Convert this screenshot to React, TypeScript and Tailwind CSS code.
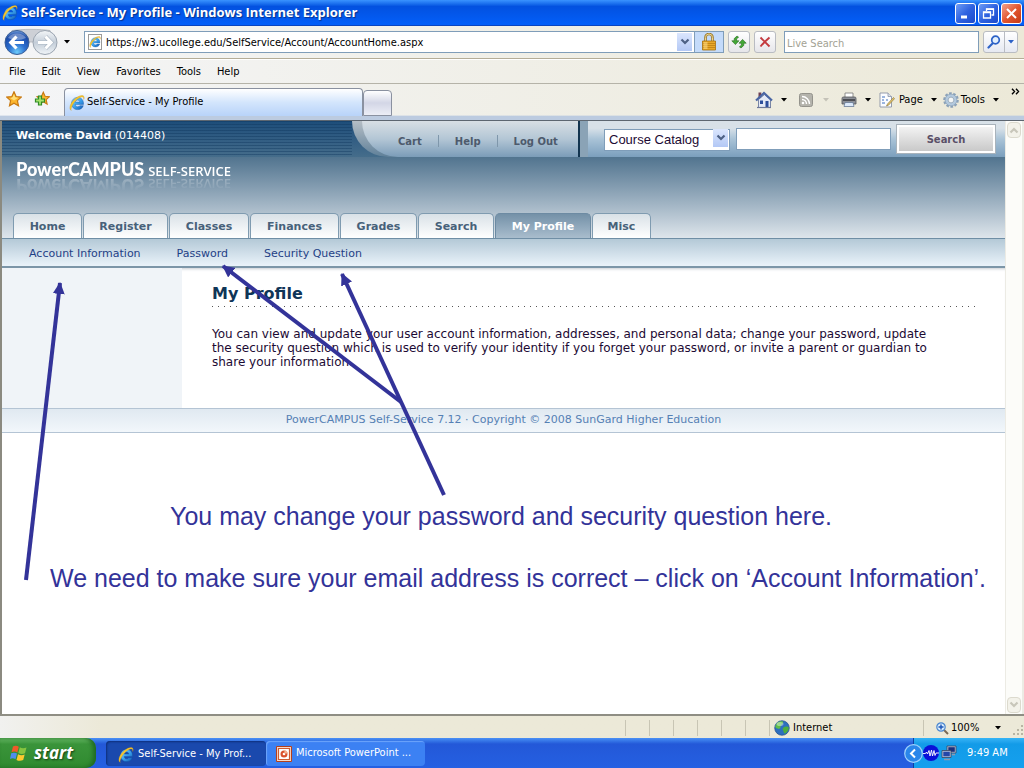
import React, { useId, useState } from "react";

const TAHOMA = "font-['DejaVu_Sans_Condensed','DejaVu_Sans',sans-serif]";
const VERDANA = "font-['DejaVu_Sans',sans-serif]";

type IconProps = { className?: string };

function IeLogo({ className = "size-4" }: IconProps) {
  const id = useId();
  return (
    <svg viewBox="0 0 16 16" className={className} aria-hidden="true">
      <defs>
        <linearGradient id={id} x1="0" y1="0" x2="1" y2="1">
          <stop offset="0" stopColor="#8fdcff" />
          <stop offset="0.5" stopColor="#3ba4f0" />
          <stop offset="1" stopColor="#1257b0" />
        </linearGradient>
      </defs>
      <path
        d="M8.6 2.4c-3.500 0-6.100 2.600-6.100 6.100s2.500 6.100 6.100 6.100c2.800 0 4.900-1.400 5.700-3.900h-3.500c-.4.7-1.100 1.100-2 1.100-1.500 0-2.400-.9-2.500-2.400h8.200c.4-4.200-2-7-5.900-7zM6.300 7.100c.2-1.300 1.100-2 2.300-2s2.100.7 2.200 2z"
        fill={`url(#${id})`}
        stroke="#0e4f9e"
        strokeWidth="0.4"
      />
      <path
        d="M2.300 15.400C.2 14.500.4 10.800 3.100 7.100 6.300 2.700 11.600-.5 14.200.8c1.200.6 1.200 2 .5 3.700.2-1.300 0-2.100-.8-2.400-2-.8-6.300 2-9 5.900-2.300 3.200-3.400 6.500-2.600 7.400z"
        fill="#f6c72f"
        stroke="#c98f13"
        strokeWidth="0.3"
      />
    </svg>
  );
}

function Caret({ className = "text-black" }: IconProps) {
  return (
    <svg viewBox="0 0 6 4" className={`h-1 w-1.5 shrink-0 ${className}`} aria-hidden="true">
      <path d="M0 0h6L3 3.500z" fill="currentColor" />
    </svg>
  );
}

function Chevron({ className = "text-[#4d6185]" }: IconProps) {
  return (
    <svg viewBox="0 0 10 8" className={`h-2 w-2.5 ${className}`} aria-hidden="true">
      <path d="M1.500 1.500 5 5l3.500-3.500" fill="none" stroke="currentColor" strokeWidth="2.200" />
    </svg>
  );
}

function HistoryButtons() {
  return (
    <div className="relative flex h-7 w-[54px] shrink-0 items-center justify-between">
      <svg viewBox="0 0 54 28" className="absolute inset-0 h-7 w-[54px]" aria-hidden="true">
        <defs>
          <radialGradient id="backFill" cx="0.5" cy="0.9" r="0.9">
            <stop offset="0" stopColor="#6ccbfa" />
            <stop offset="0.4" stopColor="#2c6fd0" />
            <stop offset="0.8" stopColor="#1b4aa8" />
            <stop offset="1" stopColor="#7aa5e0" />
          </radialGradient>
          <linearGradient id="forwardFill" x1="0" y1="0" x2="0" y2="1">
            <stop offset="0" stopColor="#f4f6f8" />
            <stop offset="0.5" stopColor="#c3cdd8" />
            <stop offset="1" stopColor="#f1f5f8" />
          </linearGradient>
        </defs>
        <path d="M8 2.500C18 1 36 1 46 2.500L50 14H4z" fill="#cdd0d6" stroke="#aeb2ba" strokeWidth="0.800" />
        <circle cx="13" cy="14.500" r="12" fill="url(#backFill)" stroke="#3b5f96" />
        <path d="M4 10a10 8 0 0 1 18 0q-9 4-18 0z" fill="#fff" opacity="0.350" />
        <path d="M12.500 8.500 6.800 14.500l5.700 6M7.500 14.500H20" fill="none" stroke="#fff" strokeWidth="3.200" />
        <circle cx="41" cy="14.500" r="12" fill="url(#forwardFill)" stroke="#9aa4b0" />
        <path d="M41.500 8.500l5.700 6-5.700 6M46.500 14.500H34" fill="none" stroke="#aab5c2" strokeWidth="4.200" />
        <path d="M41.500 8.500l5.700 6-5.700 6M46.500 14.500H34" fill="none" stroke="#fff" strokeWidth="3" />
      </svg>
      <button aria-label="Back" className="relative size-6 rounded-full" />
      <button aria-label="Forward" className="relative size-6 rounded-full" />
    </div>
  );
}

function PageIeIcon() {
  return (
    <span className="relative flex h-4 w-3.5 shrink-0 items-center justify-center border border-[#9a9a9a] bg-white">
      <IeLogo className="size-3 shrink-0" />
    </span>
  );
}

function LockIcon() {
  return (
    <svg viewBox="0 0 14 18" className="h-[18px] w-3.5" aria-hidden="true">
      <path d="M3.500 9V4.500a3.500 3.500 0 0 1 7 0V9" fill="none" stroke="#9b7a2c" strokeWidth="2.600" />
      <path d="M3.500 9V4.500a3.500 3.500 0 0 1 7 0V9" fill="none" stroke="#ecd48e" strokeWidth="1" />
      <path d="M.5 8h13v9H.5z" fill="#e9a92a" stroke="#a56f0e" strokeWidth="0.800" />
      <path d="M1 10.500h12M1 12.500h12M1 14.500h12" stroke="#b97a10" strokeWidth="0.700" />
      <path d="M1.500 9h4v7h-4z" fill="#ffe08a" opacity="0.550" />
    </svg>
  );
}

function RefreshIcon() {
  return (
    <svg viewBox="0 0 16 16" className="size-4" aria-hidden="true">
      <path d="M.8 6.800h2.400V4.600L6 2 7.600 3.200 5.600 4.800v2H8L4.400 10.600z" fill="#43a836" stroke="#256b1d" strokeWidth="0.600" />
      <path d="M15.200 9.200h-2.400v2.200L10 14l-1.600-1.200 2-1.600v-2H8l3.600-3.800z" fill="#43a836" stroke="#256b1d" strokeWidth="0.600" />
    </svg>
  );
}

function StopIcon() {
  return (
    <svg viewBox="0 0 12 12" className="size-3" aria-hidden="true">
      <path d="M1.500 1.500C4 4 7 7 10.500 10.500M10.500 1.500C7 4.500 4 7.500 1.500 10.500" stroke="#c43a3f" strokeWidth="1.900" fill="none" />
    </svg>
  );
}

function MagnifierIcon({ className = "size-3.5" }: IconProps) {
  return (
    <svg viewBox="0 0 14 14" className={className} aria-hidden="true">
      <path d="M6 8 1.500 12.500" stroke="#2d62c7" strokeWidth="2.200" strokeLinecap="round" />
      <circle cx="8.500" cy="5" r="3.800" fill="#e3f0fd" stroke="#2d62c7" strokeWidth="1.700" />
    </svg>
  );
}

const STAR = "M8 .8l2.100 4.800 5.200.5-3.900 3.500 1.100 5.200L8 12.200l-4.500 2.600 1.100-5.200L.7 6.100l5.200-.5z";

function StarIcon() {
  return (
    <svg viewBox="0 0 16 16" className="size-4" aria-hidden="true">
      <path d={STAR} fill="#fcb52c" stroke="#c87a14" strokeWidth="1.200" />
      <path d="M8 3l1.200 3.300 3 .4L8 9.500 4.500 7.200l2-.9z" fill="#ffe07a" />
    </svg>
  );
}

function AddStarIcon() {
  return (
    <svg viewBox="0 0 16 16" className="size-4" aria-hidden="true">
      <g transform="translate(2.500 0.500) scale(0.850)">
        <path d={STAR} fill="#fcb52c" stroke="#c87a14" strokeWidth="1.300" />
      </g>
      <path d="M4.500 5h3v3h3v3h-3v3h-3v-3h-3V8h3z" fill="#a6e36c" stroke="#2f8c27" strokeWidth="1.200" />
    </svg>
  );
}

function HomeIcon() {
  return (
    <svg viewBox="0 0 18 18" className="size-[18px]" aria-hidden="true">
      <path d="M3.500 1.500h2.800v6H3.500z" fill="#6d3f52" />
      <path d="M3.500 8.500v8h12v-8L9.500 3.500z" fill="#e4e9f6" stroke="#5c6c94" strokeWidth="0.800" />
      <path d="M1 9.500 9 2l8 7.500" fill="none" stroke="#4a66a4" strokeWidth="2.200" />
      <path d="M5 9.500h3v3.500H5zM10.500 10h3v6.500h-3z" fill="#2d4e9b" />
      <path d="M2 16.500h14" stroke="#6d789a" strokeWidth="1.200" />
    </svg>
  );
}

function FeedIcon() {
  return (
    <svg viewBox="0 0 14 14" className="size-3.5" aria-hidden="true">
      <rect x="0.500" y="0.500" width="13" height="13" rx="2" fill="#b4b3ac" stroke="#94938c" />
      <circle cx="4" cy="10" r="1.300" fill="#fff" />
      <path d="M3 6.500a4.500 4.500 0 0 1 4.500 4.500M3 3.500a7.500 7.500 0 0 1 7.500 7.500" fill="none" stroke="#fff" strokeWidth="1.400" />
    </svg>
  );
}

function PrinterIcon() {
  return (
    <svg viewBox="0 0 16 16" className="size-4" aria-hidden="true">
      <path d="M4 1h8v5H4z" fill="#fff" stroke="#777" strokeWidth="0.800" />
      <path d="M1 6.500C1 5.500 1.500 5 2.500 5h11c1 0 1.500.5 1.500 1.500V12H1z" fill="#8d9097" stroke="#54565c" strokeWidth="0.800" />
      <path d="M2 8h12" stroke="#3c3e44" strokeWidth="1.600" />
      <path d="M4 10.500h8l1 4H3z" fill="#dce9fa" stroke="#6a7c98" strokeWidth="0.800" />
    </svg>
  );
}

function PageIcon() {
  return (
    <svg viewBox="0 0 16 16" className="size-4" aria-hidden="true">
      <path d="M1 1h8l3.500 3.500V15H1z" fill="#fbfcff" stroke="#8a93a6" strokeWidth="0.900" />
      <path d="M9 1v3.500h3.500" fill="#dde3ee" stroke="#8a93a6" strokeWidth="0.800" />
      <path d="M3 5h3M3 8h2M3 11h3M7 8h2" stroke="#3d6fbf" />
      <path d="M14.500 5.500 8.500 12l-1 2 2-.8 6-6.500z" fill="#e9c668" stroke="#8e7b45" strokeWidth="0.700" />
    </svg>
  );
}

function GearIcon() {
  return (
    <svg viewBox="0 0 16 16" className="size-4" aria-hidden="true">
      <circle cx="8" cy="8" r="6.600" fill="none" stroke="#8ba1b8" strokeWidth="2.400" strokeDasharray="2.600 1.540" />
      <circle cx="8" cy="8" r="4.600" fill="none" stroke="#b3c9de" strokeWidth="3" />
      <circle cx="8" cy="8" r="5.900" fill="none" stroke="#8299b0" strokeWidth="0.600" />
      <circle cx="8" cy="8" r="2.900" fill="#f4f6f6" stroke="#7c93aa" strokeWidth="0.700" />
    </svg>
  );
}

function GlobeIcon() {
  return (
    <svg viewBox="0 0 16 16" className="size-4" aria-hidden="true">
      <circle cx="8" cy="8" r="7.300" fill="#2d6fbe" stroke="#24508b" strokeWidth="0.700" />
      <path d="M3 3C5 1 8 1 9 1.500 10 3 8 4 7 5.500 6 7 7 8 5 9 3 8.500 1.500 8 1.200 6.500z" fill="#5fbd4a" />
      <path d="M10 7c2-1 4-.5 4.800.5 0 3-2 5-4 6.300C9 12 9.500 10 8.500 9z" fill="#4cae3d" />
      <ellipse cx="6" cy="4" rx="3.500" ry="2" fill="#fff" opacity="0.400" />
    </svg>
  );
}

function ZoomIcon() {
  return (
    <svg viewBox="0 0 13 13" className="size-[13px]" aria-hidden="true">
      <path d="M8 8l4 4" stroke="#7b6a55" strokeWidth="2" />
      <circle cx="5" cy="5" r="4.200" fill="#d9ecfc" stroke="#4a86cf" strokeWidth="1.200" />
      <path d="M5 2.500v5M2.500 5h5" stroke="#1d55b8" strokeWidth="1.400" />
    </svg>
  );
}

function WindowsFlag() {
  return (
    <svg viewBox="0 0 18 18" className="size-[18px]" aria-hidden="true">
      <path d="M3 2.500C5 1.500 7 1.500 8.800 2.800L7.300 8.500C5.600 7.300 3.500 7.300 1.500 8.200z" fill="#f0592a" />
      <path d="M9.800 3.300c2 1.200 4.300 1.200 6.700.2L15 9.200c-2.200 1-4.400 1-6.700-.2z" fill="#86c440" />
      <path d="M1.200 9.300c2-.9 4-.9 5.800.3l-1.500 5.700c-1.700-1.200-3.800-1.200-5.500-.3z" fill="#4f8df0" />
      <path d="M8 10.200c2.200 1.200 4.500 1.200 6.700.2l-1.500 5.700c-2.300 1-4.600 1-6.700-.2z" fill="#fdc92f" />
    </svg>
  );
}

function PowerPointIcon() {
  return (
    <svg viewBox="0 0 16 16" className="size-4" aria-hidden="true">
      <path d="M.5.5h15v15H.5z" fill="#f6d9ca" stroke="#b4401d" />
      <path d="M2.500 2.500h11v11h-11z" fill="#fff" stroke="#cf5b32" strokeWidth="1.200" />
      <circle cx="8" cy="8" r="3.500" fill="#d9512c" />
      <circle cx="8" cy="8" r="1.300" fill="#fff" />
      <path d="M8.400 7.600V4.300a3.500 3.500 0 0 1 3.300 3.300z" fill="#f5b08f" />
    </svg>
  );
}

function TrayWaveIcon() {
  return (
    <svg viewBox="0 0 16 16" className="size-4" aria-hidden="true">
      <circle cx="8" cy="8" r="8" fill="#0a10d8" />
      <path d="M0 8.500h2.500l1-1.500 1 2L6 5.500 7 11l1.500-6 1 6L11 5.500l1 5 1-2.500h3" fill="none" stroke="#fff" strokeWidth="0.900" />
    </svg>
  );
}

function TrayNetworkIcon() {
  return (
    <svg viewBox="0 0 16 16" className="size-4" aria-hidden="true">
      <path d="M6 1h9v7H6z" fill="#b9c3da" stroke="#39445f" strokeWidth="0.800" />
      <path d="M7.300 2.200h6.500v4.600H7.300z" fill="#1b2f7a" />
      <path d="M1 5.500h9v7H1z" fill="#b9c3da" stroke="#39445f" strokeWidth="0.800" />
      <path d="M2.300 6.700h6.500v4.600H2.300z" fill="#2446a8" />
      <path d="M3 14.500h6M11 9.500h3" stroke="#8d97b0" strokeWidth="1.500" />
    </svg>
  );
}

function CaptionButton({ label, tone, children }: { label: string; tone: string; children: React.ReactNode }) {
  return (
    <button
      aria-label={label}
      className={`flex size-[21px] items-center justify-center rounded-[3px] border border-white ${tone}`}
    >
      <svg viewBox="0 0 13 13" className="size-[13px]" fill="none" stroke="#fff" aria-hidden="true">
        {children}
      </svg>
    </button>
  );
}

const BLUE_CAPTION = "bg-linear-to-br from-[#6f9cf5] via-[#2f62e0] to-[#1c4acb]";

function TitleBar() {
  return (
    <header className="flex h-[26px] items-center bg-linear-to-b from-[#3a93ff] via-[#0351e0] via-25% to-[#0360fb] pr-0.5 pl-0.5 shadow-[inset_0_-1px_0_#0a45c0]">
      <IeLogo className="size-4" />
      <h1 className="ml-[3px] font-['Open_Sans','Noto_Sans',sans-serif] text-[13px] font-bold whitespace-nowrap text-white [text-shadow:1px_1px_1px_#08318c]">
        Self-Service - My Profile - Windows Internet Explorer
      </h1>
      <div className="ml-auto flex gap-0.5">
        <CaptionButton label="Minimize" tone={BLUE_CAPTION}>
          <path d="M2 10h6" strokeWidth="3" />
        </CaptionButton>
        <CaptionButton label="Restore" tone={BLUE_CAPTION}>
          <path d="M4.500 4V2h7v6h-2" strokeWidth="1.300" />
          <path d="M1.500 5h7v6h-7z" strokeWidth="1.300" />
          <path d="M1 5.500h8M4 2.300h8" strokeWidth="1.600" />
        </CaptionButton>
        <CaptionButton label="Close" tone="bg-linear-to-br from-[#f0a08a] via-[#e2562f] to-[#c43a12]">
          <path d="M2 2l9 9M11 2l-9 9" strokeWidth="2" />
        </CaptionButton>
      </div>
    </header>
  );
}

const TOOL_BUTTON =
  "flex h-[22px] w-[22px] shrink-0 items-center justify-center rounded-[3px] border border-[#b9bcc2] bg-linear-to-b from-white to-[#e6e6ea]";

function AddressBar() {
  const [url, setUrl] = useState("https://w3.ucollege.edu/SelfService/Account/AccountHome.aspx");
  return (
    <div className="flex h-[33px] items-center border-b border-[#b5ad97] pr-1.5 pl-1">
      <HistoryButtons />
      <button aria-label="Recent pages" className="ml-1.5 flex h-4 w-1.5 items-center">
        <Caret />
      </button>
      <div className="ml-3.5 flex h-[22px] flex-1 items-center border border-[#7f9db9] bg-white pl-[3px]">
        <PageIeIcon />
        <input
          aria-label="Address"
          value={url}
          onChange={(e) => setUrl(e.target.value)}
          className="ml-1 min-w-0 flex-1 bg-transparent pt-0.5 text-[11px] text-black outline-none"
        />
        <button
          aria-label="Show address history"
          className="flex h-[18px] w-[15px] items-center justify-center bg-linear-to-b from-[#dbe6fd] to-[#b3c8f5]"
        >
          <Chevron />
        </button>
        <button
          aria-label="Security report"
          className="ml-0.5 flex h-5 w-[29px] items-center justify-center border-l border-[#7f9db9] bg-[#c4dbfa]"
        >
          <LockIcon />
        </button>
      </div>
      <button aria-label="Refresh" className={`ml-1 ${TOOL_BUTTON}`}>
        <RefreshIcon />
      </button>
      <button aria-label="Stop" className={`ml-1 ${TOOL_BUTTON}`}>
        <StopIcon />
      </button>
      <input
        aria-label="Live Search"
        placeholder="Live Search"
        className="ml-2 h-[22px] w-[195px] border border-[#7f9db9] bg-white px-0.5 pt-0.5 text-[11px] outline-none placeholder:text-[#a3a294]"
      />
      <div className="ml-1 flex h-[22px] w-[35px] rounded-[3px] border border-[#b9bcc2] bg-linear-to-b from-white to-[#e6e9f2]">
        <button aria-label="Search the web" className="flex flex-1 items-center justify-center border-r border-[#b9bcc2]">
          <MagnifierIcon />
        </button>
        <button aria-label="Search options" className="flex w-3 items-center justify-center">
          <Caret className="text-[#2d62c7]" />
        </button>
      </div>
    </div>
  );
}

function MenuBar() {
  const items = ["File", "Edit", "View", "Favorites", "Tools", "Help"];
  return (
    <nav
      aria-label="Browser menu"
      className="flex h-[25px] items-center gap-4 border-t border-b border-t-white border-b-[#b5b3a8] pt-0.5 pl-[9px] text-[11px]"
    >
      {items.map((item) => (
        <button key={item}>{item}</button>
      ))}
    </nav>
  );
}

function TabStrip() {
  return (
    <div className="flex h-[37px] items-end border-b border-[#5d6670] bg-linear-to-b from-transparent from-86% to-[#bccbe0] to-90%">
      <div className="flex h-full items-center gap-3 pb-1.5 pl-1.5">
        <button aria-label="Favorites Center"><StarIcon /></button>
        <button aria-label="Add to Favorites"><AddStarIcon /></button>
      </div>
      <div className="mb-1 ml-3.5 flex h-7 w-[299px] items-center gap-0.5 rounded-t-[4px] border border-b-0 border-[#8a91a0] bg-linear-to-b from-white via-[#d3e5fc] to-[#b8d3f9] pl-1 text-[11px]">
        <IeLogo className="size-4" />
        <span>Self-Service - My Profile</span>
      </div>
      <button
        aria-label="New Tab"
        className="mb-1 h-[26px] w-[29px] rounded-t-[4px] border border-[#8a91a0] bg-linear-to-b from-white via-[#d3d6e6] to-[#eceef6]"
      />
      <div className="ml-auto flex h-full items-center pb-1 text-[11px]">
        <button aria-label="Home page"><HomeIcon /></button>
        <Caret className="ml-2 text-black" />
        <button aria-label="Feeds" className="ml-3"><FeedIcon /></button>
        <Caret className="ml-2.5 text-[#c4c2b8]" />
        <button aria-label="Print" className="ml-3"><PrinterIcon /></button>
        <Caret className="ml-2 text-black" />
        <button className="ml-2 flex items-center gap-1"><PageIcon />Page<Caret className="ml-1 text-black" /></button>
        <button className="ml-1.5 flex items-center gap-0.5"><GearIcon />Tools<Caret className="ml-1.5 text-black" /></button>
        <button aria-label="More commands" className="mr-1 ml-3 self-start pt-1">
          <svg viewBox="0 0 9 7" className="h-[7px] w-[9px]" fill="none" stroke="#000" strokeWidth="1.400" aria-hidden="true">
            <path d="M1 .8 3.500 3.500 1 6.200M5 .8l2.500 2.700L5 6.200" />
          </svg>
        </button>
      </div>
    </div>
  );
}

const TABS = [
  { label: "Home", width: "w-[69px]" },
  { label: "Register", width: "w-[85px]" },
  { label: "Classes", width: "w-20" },
  { label: "Finances", width: "w-[89px]" },
  { label: "Grades", width: "w-[77px]" },
  { label: "Search", width: "w-[76px]" },
  { label: "My Profile", width: "w-24" },
  { label: "Misc", width: "w-[59px]" },
];

function UtilityPanel() {
  return (
    <div className="flex w-[228px] rounded-bl-[44px] border-r-2 border-[#12344f] bg-linear-to-b from-[#b5bec5] to-[#5f8099]">
      <nav
        aria-label="Account"
        className="ml-2.5 flex flex-1 items-center rounded-bl-[40px] bg-linear-to-b from-[#d8dfe4] via-[#b3c6d5] to-[#7b9cb8] pt-1 pl-9 text-[10px] font-bold text-[#4d5a6c]"
      >
        <a href="#cart">Cart</a>
        <span className="mx-4 h-3 w-px bg-[#7f97ab]" />
        <a href="#help">Help</a>
        <span className="mx-4 h-3 w-px bg-[#7f97ab]" />
        <a href="#logout" className="whitespace-nowrap">Log Out</a>
      </nav>
    </div>
  );
}

function CatalogSearch() {
  return (
    <form
      onSubmit={(e) => e.preventDefault()}
      className="flex w-[425px] items-center border-l-8 border-[#8aa3b6] bg-linear-to-b from-[#d8e1e8] from-20% via-[#a9c3d7] via-50% to-[#7b9fbd] pr-2.5 pl-4"
    >
      <div className="relative">
        <select
          aria-label="Search in"
          className="h-[22px] w-[126px] appearance-none border border-[#7f9db9] bg-white pl-1 font-['Liberation_Sans',sans-serif] text-[13px] text-[#1c0a33]"
        >
          <option>Course Catalog</option>
        </select>
        <span className="pointer-events-none absolute top-0.5 right-0.5 flex h-[18px] w-[15px] items-center justify-center bg-linear-to-b from-[#dbe6fd] to-[#b3c8f5]">
          <Chevron />
        </span>
      </div>
      <input aria-label="Search text" className="ml-1.5 h-[22px] min-w-0 flex-1 border border-[#7f9db9] bg-white px-1 text-xs" />
      <button className="ml-1.5 h-7 w-[98px] border-2 border-white bg-linear-to-b from-[#f3f3f3] to-[#c9c9c9] text-[10px] font-bold text-[#5a5068] shadow-[0_0_0_1px_#a9b3bb]">
        Search
      </button>
    </form>
  );
}

function SiteHeader() {
  return (
    <div className="bg-linear-to-b from-[#1a4a74] from-0% via-[#50738e] via-24% to-[#dfe6ec] to-80%">
      <div className="flex h-9 bg-linear-to-b from-[#1d4d7a] to-[#456d8b]">
        <div className="flex-1 bg-[repeating-linear-gradient(to_bottom,#0d355c66_0px,#0d355c66_1px,transparent_1px,transparent_3px)] pt-[7px] pl-3.5 text-[11px] leading-4 text-white">
          <strong>Welcome David</strong> (014408)
        </div>
        <UtilityPanel />
        <CatalogSearch />
      </div>
      <div className="flex h-[81px] flex-col justify-between">
        <div className="flex items-baseline gap-1 pt-0.5 pl-3.5 leading-5 text-white [-webkit-box-reflect:below_-7px_linear-gradient(transparent_30%,#ffffff66)]">
          <span className="font-['Lato',sans-serif] text-lg leading-5 font-black">PowerCAMPUS</span>
          <span className="font-['Open_Sans',sans-serif] text-[13px] font-semibold">SELF-SERVICE</span>
        </div>
        <nav aria-label="Sections" className="flex gap-px pl-[11px]">
          {TABS.map((tab) => (
            <a
              key={tab.label}
              href={`#${tab.label}`}
              className={`${tab.width} h-[25px] rounded-t-[5px] border border-b-0 text-center text-[11px] leading-[25px] font-bold ${
                tab.label === "My Profile"
                  ? "border-[#6d8ba3] bg-linear-to-b from-[#7491a8] to-[#a9bdcd] text-white"
                  : "border-[#7f9bb0] bg-linear-to-b from-[#d9e1e7] to-white text-[#47617a]"
              }`}
            >
              {tab.label}
            </a>
          ))}
        </nav>
      </div>
      <nav
        aria-label="My Profile pages"
        className="flex h-[30px] items-center gap-9 border-t border-b-2 border-t-[#6f8ea5] border-b-[#7c96a8] bg-linear-to-b from-[#b4c9d7] to-[#eaf3fa] pt-1 pl-[27px] text-[11px] text-[#1f3f86]"
      >
        <a href="#account">Account Information</a>
        <a href="#password">Password</a>
        <a href="#question">Security Question</a>
      </nav>
    </div>
  );
}

function ScrollBar() {
  return (
    <div aria-hidden="true" className="flex w-[19px] flex-col justify-between border-l border-r-2 border-[#ecebe4] bg-[#fcfcf9] p-px">
      <span className="flex h-4 items-center justify-center rounded-sm border border-[#dcdace] bg-[#f3f2ea]">
        <Chevron className="rotate-180 text-[#c8c6ba]" />
      </span>
      <span className="flex h-4 items-center justify-center rounded-sm border border-[#dcdace] bg-[#f3f2ea]">
        <Chevron className="text-[#c8c6ba]" />
      </span>
    </div>
  );
}

function SitePage() {
  return (
    <main className={`flex flex-1 border-l-2 border-[#8b8a80] bg-white ${VERDANA}`}>
      <div className="min-w-0 flex-1">
        <SiteHeader />
        <div className="flex h-[140px] shadow-[inset_0_3px_3px_-2px_#c7ccd2]">
          <aside className="w-[180px] bg-[#f0f4f8]" />
          <section className="flex-1 px-[30px] pt-4">
            <h2 className="text-base leading-5 font-bold text-[#0f3557]">My Profile</h2>
            <div className="mt-0.5 h-px bg-[repeating-linear-gradient(to_right,#555_0px,#555_1px,transparent_1px,transparent_6px)]" />
            <p className="mt-5 pr-9 text-xs leading-[14px] text-[#1c0a33]">
              You can view and update your user account information, addresses, and personal data; change your
              password, update the security question which is used to verify your identity if you forget your
              password, or invite a parent or guardian to share your information.
            </p>
          </section>
        </div>
        <footer className="flex h-[25px] items-center justify-center border-y border-[#b4c4d4] bg-linear-to-b from-[#e0e9f1] to-[#f2f7fb] text-[11px] text-[#5580b4]">
          PowerCAMPUS Self-Service 7.12 · Copyright © 2008 SunGard Higher Education
        </footer>
      </div>
      <ScrollBar />
    </main>
  );
}

function StatusBar() {
  return (
    <div className="flex h-6 items-center border-t-2 border-[#8f8e84] bg-linear-to-r from-[#f1f1ef] via-[#ece9d8] via-10% to-[#ece9d8] pt-0.5 text-[11px]">
      <div className="ml-auto flex">
        {[0, 1, 2, 3, 4, 5].map((n) => (
          <span key={n} className="h-4 w-6 border-l border-[#c8c5b4]" />
        ))}
      </div>
      <div className="flex h-4 w-[154px] items-center gap-[3px] border-l border-[#c8c5b4] pl-1">
        <GlobeIcon />
        Internet
      </div>
      <button className="flex h-4 w-[101px] items-center border-l border-[#c8c5b4] pl-3">
        <ZoomIcon />
        <span className="ml-0.5">100%</span>
        <Caret className="ml-4 text-black" />
        <svg viewBox="0 0 12 12" className="ml-auto size-3 self-end" fill="#b8b5a4" aria-hidden="true">
          <path d="M9 1h2v2H9zM9 5h2v2H9zM5 5h2v2H5zM9 9h2v2H9zM5 9h2v2H5zM1 9h2v2H1z" />
        </svg>
      </button>
    </div>
  );
}

function TaskBar() {
  return (
    <footer className="flex h-[30px] bg-linear-to-b from-[#4a90f5] via-[#2358d8] via-20% to-[#2560e2] text-[11px] text-white">
      <button className="flex w-24 items-center gap-1.5 rounded-r-[10px] bg-linear-to-b from-[#6cc06a] via-[#3a943a] via-20% to-[#2f8a2f] pl-2.5 shadow-[inset_-3px_0_4px_#1f6a22]">
        <WindowsFlag />
        <span className="font-['Open_Sans',sans-serif] text-[17px] leading-5 font-bold italic [text-shadow:1px_1px_2px_#123f12]">
          start
        </span>
      </button>
      <button className="mt-[3px] ml-2.5 flex h-[25px] w-[160px] items-center gap-1 rounded-sm bg-[#1a49ad] pt-0.5 pl-3 whitespace-nowrap shadow-[inset_1px_1px_2px_#0e2f7c]">
        <IeLogo className="size-4 shrink-0" />
        Self-Service - My Prof...
      </button>
      <button className="mt-[3px] flex h-[25px] w-[159px] items-center gap-1 rounded-sm bg-[#3c81f3] pl-2.5 whitespace-nowrap shadow-[inset_1px_1px_1px_#6da5fb]">
        <PowerPointIcon />
        Microsoft PowerPoint ...
      </button>
      <div className="ml-auto flex w-[111px] items-center border-l border-[#0f3fa0] bg-linear-to-b from-[#35b4f6] via-[#129be8] via-20% to-[#15a0ee]">
        <button aria-label="Show hidden icons" className="-ml-2.5 shrink-0">
          <svg viewBox="0 0 19 19" className="size-[19px]" aria-hidden="true">
            <circle cx="9.500" cy="9.500" r="8.800" fill="#2a86ea" stroke="#9fd0fb" strokeWidth="1.200" />
            <path d="M11 5.500 7 9.500l4 4" fill="none" stroke="#fff" strokeWidth="2" />
          </svg>
        </button>
        <TrayWaveIcon />
        <span className="ml-0.5"><TrayNetworkIcon /></span>
        <time className="ml-2.5 whitespace-nowrap">9:49 AM</time>
      </div>
    </footer>
  );
}

function Annotations() {
  return (
    <div className="pointer-events-none absolute inset-0 overflow-hidden font-['Liberation_Sans',sans-serif] text-[25px] leading-8 whitespace-nowrap text-[#333399]">
      <svg className="absolute inset-0 h-full w-full" stroke="#333399" strokeWidth="4" aria-hidden="true">
        <defs>
          <marker id="arrowHead" viewBox="0 0 12 12" refX="11" refY="6" markerWidth="12" markerHeight="12" markerUnits="userSpaceOnUse" orient="auto">
            <path d="M0 0 12 6 0 12z" fill="#333399" stroke="none" />
          </marker>
        </defs>
        <path d="M26 580 60 283" markerEnd="url(#arrowHead)" />
        <path d="M401 402 223 266" markerEnd="url(#arrowHead)" />
        <path d="M444 495 342 274" markerEnd="url(#arrowHead)" />
      </svg>
      <p className="absolute top-[500px] left-[170px]">You may change your password and security question here.</p>
      <p className="absolute top-[562px] left-[50px]">
        We need to make sure your email address is correct – click on ‘Account Information’.
      </p>
    </div>
  );
}

export default function App() {
  return (
    <div className={`relative flex min-h-screen flex-col text-black ${TAHOMA}`}>
      <TitleBar />
      <div className="bg-linear-to-r from-[#f4f5f7] to-[#ece9d8]">
        <AddressBar />
        <MenuBar />
        <TabStrip />
      </div>
      <SitePage />
      <StatusBar />
      <TaskBar />
      <Annotations />
    </div>
  );
}
